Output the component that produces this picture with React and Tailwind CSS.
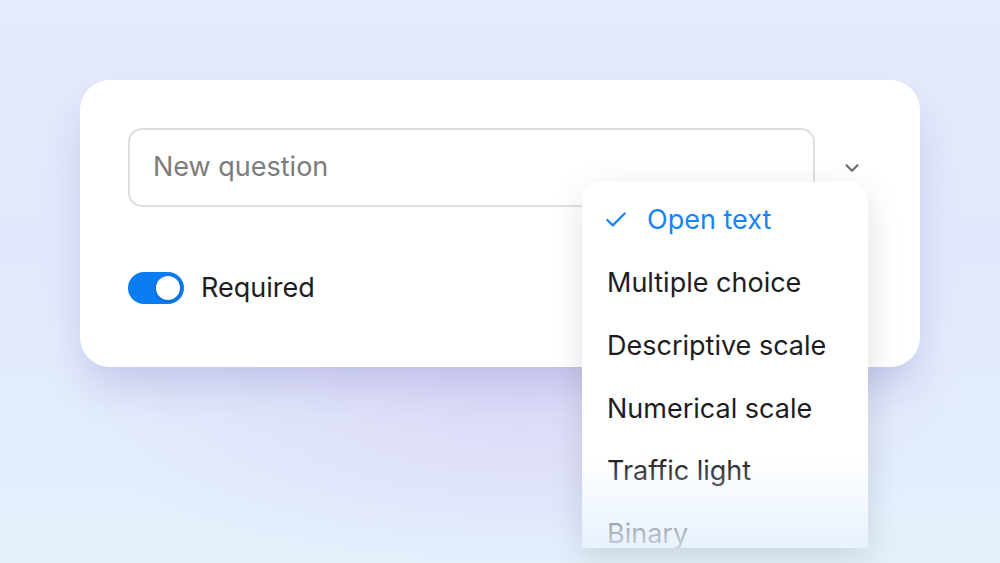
import { Check, ChevronDown } from 'lucide-react'

// Types de question proposés dans le menu déroulant.
const TYPES = ['Open text', 'Multiple choice', 'Descriptive scale', 'Numerical scale', 'Traffic light', 'Binary']

export default function App() {
  return (
    <div
      className="relative h-[563px] w-[1000px] overflow-hidden px-[80px] pt-[80px]"
      style={{ fontFamily: 'Inter, "Noto Sans", sans-serif' }}
    >
      {/* fond : dégradé bleu pâle + halo violet sous la carte */}
      <div className="absolute inset-0 -z-10 bg-[radial-gradient(ellipse_45%_30%_at_52%_72%,#dcdaf8_0%,rgba(220,218,248,0)_100%),linear-gradient(180deg,#e5ebfb_0%,#e2e8fb_45%,#e3eefc_80%,#e4f1fc_100%)]" />

      {/* --- Carte question --- */}
      <div className="relative h-[287px] rounded-[30px] bg-white px-[48px] pt-[48px] shadow-[0_22px_40px_-6px_rgba(110,105,190,0.28)]">
        <div className="flex items-center">
          <div className="flex h-[79px] w-[687px] items-center rounded-[14px] border-2 border-[#dedede] pl-[23px]">
            <span className="text-[27px] text-[#7c7c7c]">New question</span>
          </div>
          <ChevronDown className="ml-[26px] h-[22px] w-[22px] text-[#6e6e73]" strokeWidth={2.4} />
        </div>

        <div className="mt-[61px] flex items-center gap-[17px]">
          {/* interrupteur activé */}
          <div className="flex h-[32px] w-[56px] items-center justify-end rounded-full bg-[#0a7cf4] pr-[4px]">
            <div className="h-[24px] w-[24px] rounded-full bg-white shadow-[0_1px_3px_rgba(0,0,0,0.25)]" />
          </div>
          <span className="text-[27px] text-[#1d1d1f]">Required</span>
        </div>

        {/* --- Menu déroulant des types --- */}
        <div className="absolute left-[502px] top-[102px] h-[366px] w-[286px] overflow-hidden rounded-t-[18px] rounded-b-[4px] bg-white shadow-[0_10px_34px_rgba(0,0,0,0.12)]">
          <div className="flex flex-col pt-[7px]">
            {TYPES.map((t, i) => (
              <div key={t} className="flex h-[62.8px] items-center pl-[25px]">
                {i === 0 ? (
                  <>
                    <Check className="-ml-[4px] h-[26px] w-[26px] text-[#1783f5]" strokeWidth={2.1} />
                    <span className="ml-[18px] text-[27px] text-[#1783f5]">{t}</span>
                  </>
                ) : (
                  <span className="text-[27px] text-[#1d1d1f]">{t}</span>
                )}
              </div>
            ))}
          </div>
          {/* fondu vers le fond en bas */}
          <div className="absolute inset-x-0 bottom-0 h-[90px] bg-[linear-gradient(180deg,rgba(229,241,253,0)_0%,rgba(229,241,253,0.45)_45%,rgba(228,240,252,0.85)_100%)]" />
        </div>
      </div>
    </div>
  )
}
